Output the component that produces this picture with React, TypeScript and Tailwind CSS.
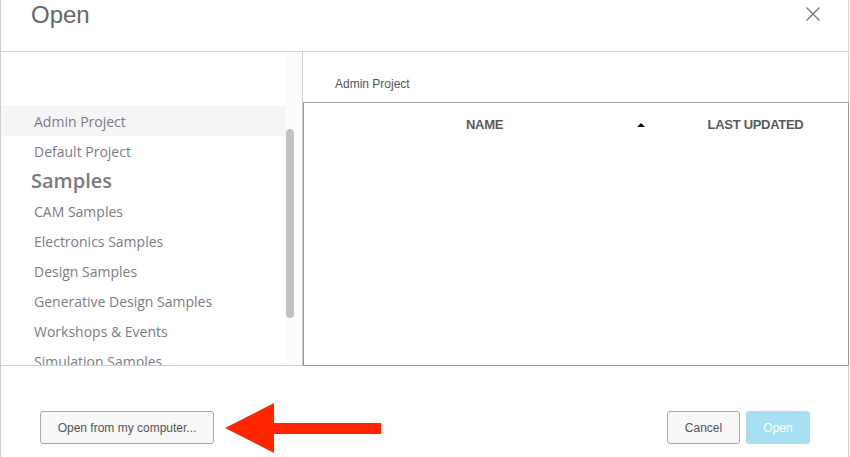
import React from "react";

const items = [
  { label: "Admin Project", active: true },
  { label: "Default Project" },
  { label: "Samples", heading: true },
  { label: "CAM Samples" },
  { label: "Electronics Samples" },
  { label: "Design Samples" },
  { label: "Generative Design Samples" },
  { label: "Workshops & Events" },
  { label: "Simulation Samples" },
];

export default function App() {
  return (
    <div className="w-[850px] h-[457px] overflow-hidden bg-white">
      <div className="w-[849px] h-[457px] border-l border-[#cfcfcf] flex flex-col" style={{ fontFamily: '"Liberation Sans", Arial, sans-serif' }}>
        {/* Header */}
        <div className="h-[52px] shrink-0 border-b border-r border-[#d6d6d6] flex items-start justify-between">
          <div className="pl-[30px] pt-[1px] text-[24px] leading-[28px] text-[#666]">Open</div>
          <svg width="14" height="14" viewBox="0 0 14 14" className="mt-[7px] mr-[28px]">
            <path d="M0.5 0.5 L13.5 13.5 M13.5 0.5 L0.5 13.5" stroke="#777" strokeWidth="1.3" fill="none" />
          </svg>
        </div>
        {/* Body */}
        <div className="h-[314px] shrink-0 flex">
          <div className="w-[302px] shrink-0 border-r border-b border-[#d0d0d0] flex overflow-hidden" style={{ fontFamily: '"Open Sans", sans-serif' }}>
            <div className="w-[285px] shrink-0 pt-[54px]">
              {items.map((it) => (
                <div
                  key={it.label}
                  className={
                    "h-[30px] flex items-center whitespace-nowrap " +
                    (it.active ? "bg-[#f4f5f7] " : "") +
                    (it.heading ? "pl-[30px] text-[20px] font-semibold text-[#7a7a7a]" : "pl-[33px] text-[14px] text-[#7b7e83]")
                  }
                >
                  {it.label}
                </div>
              ))}
            </div>
            <div className="flex-1 bg-[#fbfcfe]">
              <div className="mt-[77px] w-[8px] h-[189px] rounded-full bg-[#c1c1c1]" />
            </div>
          </div>
          <div className="flex-1 flex flex-col">
            <div className="h-[50px] shrink-0 pl-[32px] pt-[25px] text-[12px] leading-[14px] text-[#555] border-r border-[#cfcfcf]">Admin Project</div>
            <div className="flex-1 border-t border-l border-b border-r border-t-[#a8a8a8] border-l-[#999] border-b-[#999] border-r-[#999]">
              <div className="h-[44px] flex items-center text-[13px] font-bold tracking-[-0.3px] text-[#5a5a5a]">
                <div className="w-[361px] shrink-0 flex items-center pl-[28px] pr-[20px]">
                  <span className="flex-1 text-center">NAME</span>
                  <svg width="8" height="4" viewBox="0 0 8 4">
                    <polygon points="4,0 8,4 0,4" fill="#111" />
                  </svg>
                </div>
                <div className="flex-1 text-center pr-[2px]">LAST UPDATED</div>
              </div>
            </div>
          </div>
        </div>
        {/* Footer */}
        <div className="flex-1 border-r border-[#cfcfcf] flex items-start justify-between pt-[45px] pl-[39px] pr-[38px]">
          <div className="flex items-start">
            <button className="w-[174px] h-[33px] rounded-[3px] border border-[#a9a9a9] bg-[#f8f8f8] text-[12px] text-[#555]">
              Open from my computer...
            </button>
            <svg width="156" height="50" viewBox="0 0 156 50" className="ml-[11px] -mt-[8px]">
              <polygon points="0,25 49,0 49,20 156,20 156,31 49,31 49,50" fill="#ff2600" />
            </svg>
          </div>
          <div className="flex items-center gap-[6px]">
            <button className="w-[73px] h-[33px] rounded-[3px] border border-[#a9a9a9] bg-[#f8f8f8] text-[12px] text-[#555]">Cancel</button>
            <button className="w-[64px] h-[33px] rounded-[3px] bg-[#a7e0f3] text-[12px] text-white">Open</button>
          </div>
        </div>
      </div>
    </div>
  );
}
